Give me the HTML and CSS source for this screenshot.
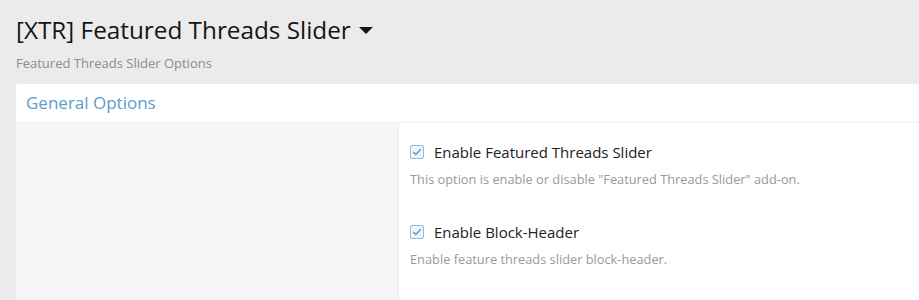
FILE: index.html
```html
<!DOCTYPE html>
<html lang="en">
<head>
  <meta charset="UTF-8">
  <title>[XTR] Featured Threads Slider</title>
  <link rel="stylesheet" href="styles.css">
</head>
<body>

  <div class="page-head">
    <h1>[XTR] Featured Threads Slider <span class="caret"></span></h1>
    <div class="page-desc">Featured Threads Slider Options</div>
  </div>

  <div class="block">
    <h2 class="block-title">General Options</h2>
    <div class="block-body">
      <div class="form-label"></div>
      <div class="form-fields">
        <div class="option">
          <label><span class="check"><svg width="10" height="8" viewBox="0 0 10 8"><path d="M1.2 4l2.6 2.4L8.8 1.2" fill="none" stroke="#5b9bd0" stroke-width="1.5"/></svg></span> Enable Featured Threads Slider</label>
          <div class="hint">This option is enable or disable "Featured Threads Slider" add-on.</div>
        </div>
        <div class="option">
          <label><span class="check"><svg width="10" height="8" viewBox="0 0 10 8"><path d="M1.2 4l2.6 2.4L8.8 1.2" fill="none" stroke="#5b9bd0" stroke-width="1.5"/></svg></span> Enable Block-Header</label>
          <div class="hint">Enable feature threads slider block-header.</div>
        </div>
      </div>
    </div>
  </div>

</body>
</html>
```

FILE: styles.css
```css
body {
  background: #ebebeb;
  font-family: "Open Sans", sans-serif;
  margin: 0;
  padding: 0 0 0 16px;
  color: #141414;
  overflow: hidden;
}

.page-head {
  padding-top: 14px;
  height: 84px;
  box-sizing: border-box;
}

h1 {
  margin: 0;
  font-size: 24.3px;
  font-weight: 400;
  line-height: 32px;
}

.caret {
  display: inline-block;
  width: 0;
  height: 0;
  border-left: 7px solid transparent;
  border-right: 7px solid transparent;
  border-top: 7px solid #141414;
  vertical-align: middle;
  margin-left: 2px;
  position: relative;
  top: -2px;
}

.page-desc {
  font-size: 13px;
  line-height: 18px;
  color: #8c8c8c;
  margin-top: 8px;
}

.block {
  background: white;
  border-radius: 3px 0 0 0;
}

.block-title {
  margin: 0;
  font-size: 17px;
  font-weight: 400;
  color: #5a9dcc;
  padding: 0 10px;
  height: 38px;
  line-height: 38px;
  border-bottom: 1px solid #f0f0f0;
}

.block-body {
  display: flex;
  height: 177px;
}

.form-label {
  width: 382px;
  background: #f5f5f5;
  border-right: 1px solid #ebebeb;
}

.form-fields {
  padding: 19px 11px;
}

.option {
  margin-bottom: 34px;
}

.option label {
  display: flex;
  align-items: center;
  gap: 10px;
  font-size: 15px;
  line-height: 20px;
  color: #222;
}

.check {
  width: 12px;
  height: 12px;
  border: 1px solid #8fbbdc;
  border-radius: 2px;
  background: #eef5fb;
  display: flex;
  align-items: center;
  justify-content: center;
}

.hint {
  font-size: 12.8px;
  line-height: 18px;
  color: #999;
  margin-top: 8px;
}
```
